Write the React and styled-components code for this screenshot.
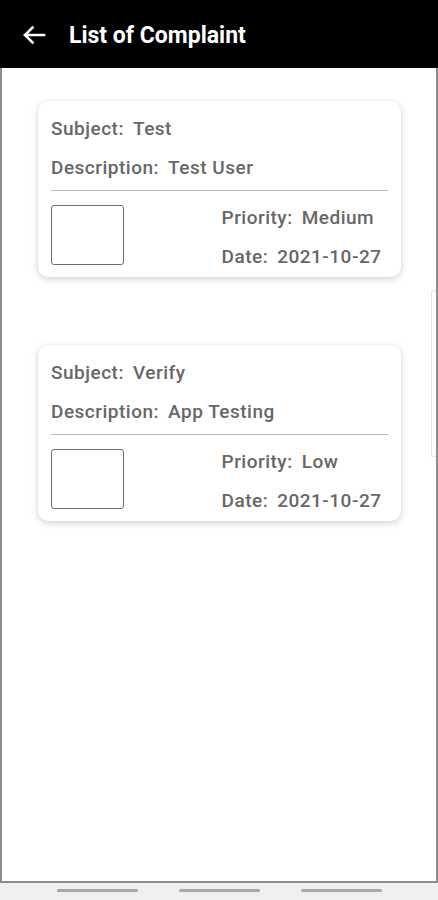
import React from 'react';
import styled, {createGlobalStyle} from 'styled-components';

const complaints = [
  {subject: 'Test', description: 'Test User', priority: 'Medium', date: '2021-10-27'},
  {subject: 'Verify', description: 'App Testing', priority: 'Low', date: '2021-10-27'},
];

export default function App() {
  return (
    <>
      <GlobalStyle />
      <Screen>
        <Header>
          <BackButton aria-label="Back">
            <svg width="24" height="20" viewBox="0 0 24 20" fill="none">
              <path
                d="M22 10H3M10.5 2.5L3 10l7.5 7.5"
                stroke="#fff"
                strokeWidth="2.6"
                strokeLinecap="square"
              />
            </svg>
          </BackButton>
          <Title>List of Complaint</Title>
        </Header>
        <Content>
          {complaints.map((c, i) => (
            <Card key={i}>
              <Line>
                <Label>Subject:</Label>
                <span>{c.subject}</span>
              </Line>
              <Line $spaced>
                <Label>Description:</Label>
                <span>{c.description}</span>
              </Line>
              <Divider />
              <Bottom>
                <Thumb />
                <Meta>
                  <Line>
                    <Label>Priority:</Label>
                    <span>{c.priority}</span>
                  </Line>
                  <Line $spaced>
                    <Label>Date:</Label>
                    <span>{c.date}</span>
                  </Line>
                </Meta>
              </Bottom>
            </Card>
          ))}
          <ScrollThumb />
        </Content>
        <NavBar>
          <Pill />
          <Pill />
          <Pill />
        </NavBar>
      </Screen>
    </>
  );
}

const GlobalStyle = createGlobalStyle`
  html, body {
    margin: 0;
    padding: 0;
    background: #fff;
  }
  body {
    font-family: Roboto, "Noto Sans", "Liberation Sans", sans-serif;
  }
`;

const Screen = styled.div`
  display: flex;
  flex-direction: column;
  width: 438px;
  height: 900px;
  overflow: hidden;
`;

const Header = styled.div`
  display: flex;
  align-items: center;
  height: 68px;
  padding: 2px 0 0 22px;
  box-sizing: border-box;
  background-color: #000;
`;

const BackButton = styled.button`
  display: flex;
  align-items: center;
  padding: 0;
  margin: 0 23px 0 0;
  border: none;
  background: none;
`;

const Title = styled.h1`
  margin: 0;
  color: #fff;
  font-size: 23px;
  font-weight: 700;
`;

const Content = styled.div`
  position: relative;
  flex: 1;
  display: flex;
  flex-direction: column;
  gap: 68px;
  padding: 33px 35px 0 36px;
  border: 2px solid #8c8c8c;
  border-top: none;
  background-color: #fff;
`;

const Card = styled.div`
  display: flex;
  flex-direction: column;
  padding: 17px 13px 12px 13px;
  border-radius: 10px;
  background-color: #fff;
  box-shadow: 0 2px 7px rgba(0, 0, 0, 0.18), 0 0 2px rgba(0, 0, 0, 0.06);
`;

const Line = styled.div`
  display: flex;
  gap: 9px;
  margin-top: ${(p) => (p.$spaced ? '17px' : '0')};
  line-height: 22px;
  font-size: 19px;
  font-weight: 500;
  letter-spacing: 0.5px;
  color: #676767;
  white-space: nowrap;
`;

const Label = styled.span`
  color: #676767;
`;

const Divider = styled.div`
  height: 1px;
  margin-top: 11px;
  background-color: #b8b8b8;
`;

const Bottom = styled.div`
  display: grid;
  grid-template-columns: 1fr 1fr;
  align-items: start;
  height: 60px;
  margin-top: 14px;
`;

const Thumb = styled.div`
  width: 73px;
  height: 60px;
  box-sizing: border-box;
  border: 1.5px solid #6e6e6e;
  border-radius: 3px;
`;

const Meta = styled.div`
  display: flex;
  flex-direction: column;
  padding: 2px 0 0 2px;
`;

const ScrollThumb = styled.div`
  position: absolute;
  top: 222px;
  right: 0;
  width: 4px;
  height: 165px;
  border: 1px solid #e4e4e4;
  border-right: none;
  border-radius: 3px 0 0 3px;
`;

const NavBar = styled.div`
  display: flex;
  justify-content: center;
  gap: 41px;
  height: 17px;
  padding-top: 6px;
  box-sizing: border-box;
  background-color: #efefef;
`;

const Pill = styled.div`
  width: 81px;
  height: 3px;
  border-radius: 2px;
  background-color: #a8a8a8;
`;
